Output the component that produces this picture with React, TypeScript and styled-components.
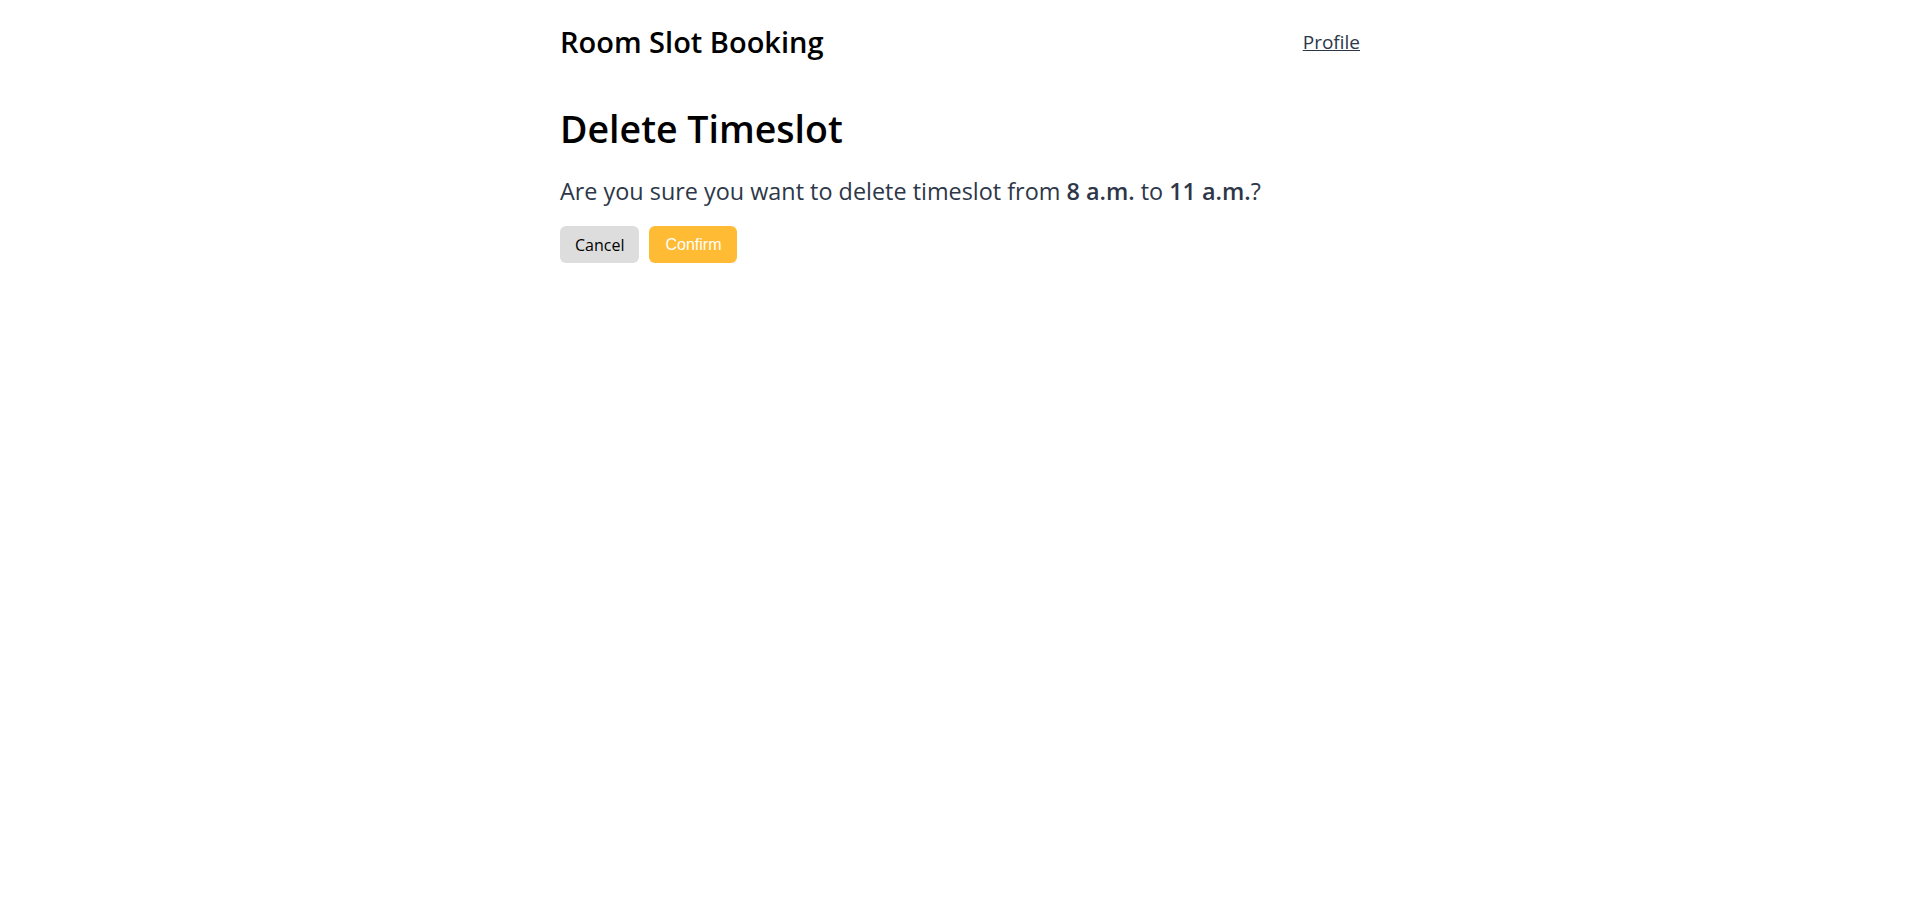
import React from "react";
import styled, { createGlobalStyle } from "styled-components";

const GlobalStyle = createGlobalStyle`
  html, body {
    margin: 0;
    padding: 0;
    background: #ffffff;
  }
  body {
    font-family: "Open Sans", "Noto Sans", sans-serif;
  }
`;

const Page = styled.div`
  max-width: 800px;
  margin: 0 auto;
  display: flex;
  flex-direction: column;
`;

const Header = styled.header`
  display: flex;
  justify-content: space-between;
  align-items: center;
  padding-top: 22px;
  height: 40px;
`;

const Brand = styled.div`
  font-size: 29px;
  font-weight: 600;
  color: #000000;
  line-height: 40px;
`;

const NavLink = styled.a`
  font-size: 19px;
  color: #2d3748;
  text-decoration: underline;
  line-height: 24px;
  cursor: pointer;
`;

const Main = styled.main`
  display: flex;
  flex-direction: column;
  padding-top: 43px;
`;

const Title = styled.h1`
  margin: 0;
  font-size: 37.5px;
  font-weight: 600;
  color: #000000;
  line-height: 48px;
`;

const Message = styled.p`
  margin: 23px 0 0 0;
  font-size: 23.4px;
  color: #2d3748;
  line-height: 30px;
`;

const Emphasis = styled.strong`
  font-weight: 600;
`;

const Actions = styled.div`
  display: flex;
  gap: 10px;
  margin-top: 20px;
`;

const Button = styled.button<{ $primary?: boolean }>`
  border: none;
  border-radius: 6px;
  height: 37px;
  padding: 0 ${(p) => (p.$primary ? "16px" : "15px")};
  font-size: 16px;
  font-family: ${(p) =>
    p.$primary ? '"Liberation Sans", Arial, sans-serif' : '"Open Sans", sans-serif'};
  background: ${(p) => (p.$primary ? "#ffbb33" : "#dddddd")};
  color: ${(p) => (p.$primary ? "#ffffff" : "#000000")};
  cursor: pointer;
`;

export default function App() {
  return (
    <>
      <GlobalStyle />
      <Page>
        <Header>
          <Brand>Room Slot Booking</Brand>
          <NavLink>Profile</NavLink>
        </Header>
        <Main>
          <Title>Delete Timeslot</Title>
          <Message>
            Are you sure you want to delete timeslot from <Emphasis>8 a.m.</Emphasis> to{" "}
            <Emphasis>11 a.m.</Emphasis>?
          </Message>
          <Actions>
            <Button>Cancel</Button>
            <Button $primary>Confirm</Button>
          </Actions>
        </Main>
      </Page>
    </>
  );
}
